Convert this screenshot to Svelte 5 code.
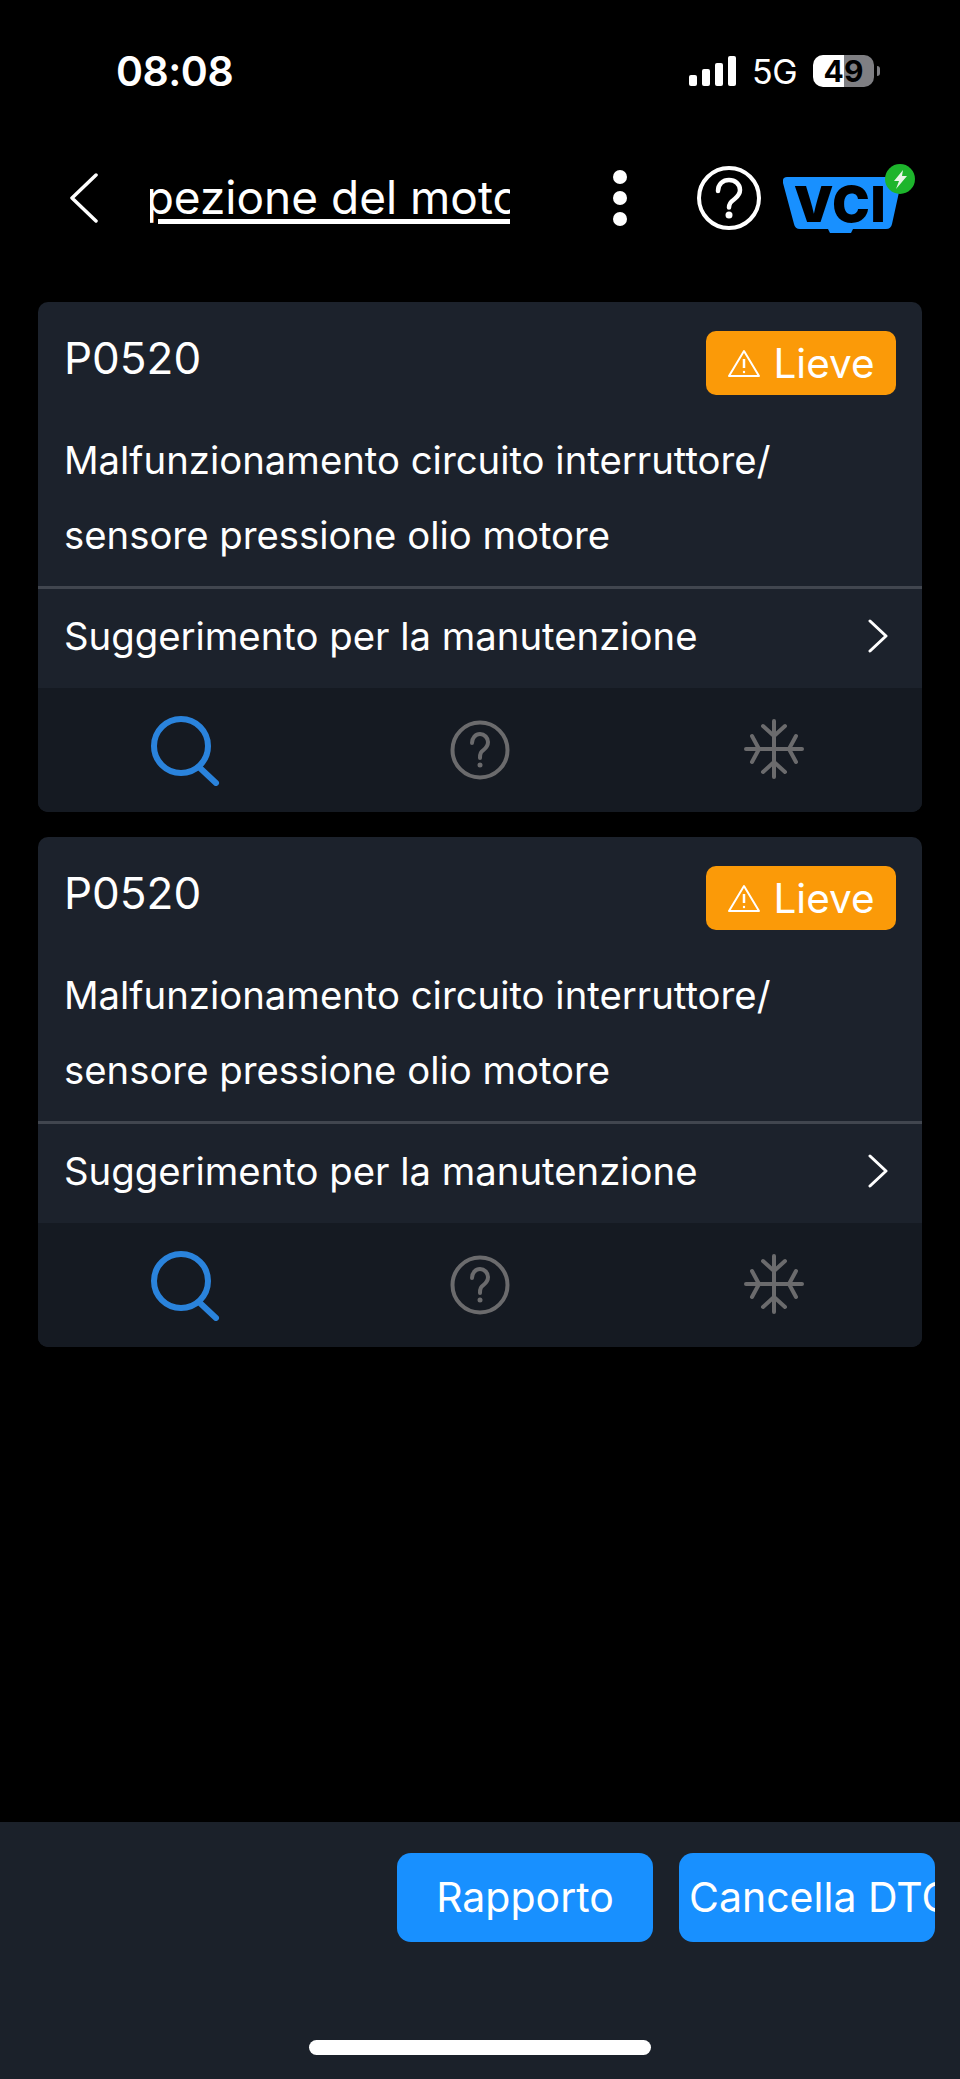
<script>
  const codes = [
    { code: 'P0520', sev: 'Lieve', l1: 'Malfunzionamento circuito interruttore/', l2: 'sensore pressione olio motore' },
    { code: 'P0520', sev: 'Lieve', l1: 'Malfunzionamento circuito interruttore/', l2: 'sensore pressione olio motore' }
  ];
</script>

<div class="page">
  <div class="status">
    <span class="time">08:08</span>
    <div class="status-right">
      <svg class="signal" width="48" height="30" viewBox="0 0 48 30" fill="#fff">
        <rect x="0" y="19" width="8" height="11" rx="2" />
        <rect x="13" y="13" width="8" height="17" rx="2" />
        <rect x="26" y="7" width="8" height="23" rx="2" />
        <rect x="39" y="0" width="8" height="30" rx="2" />
      </svg>
      <span class="net">5G</span>
      <div class="battery"><span>49</span></div>
      <div class="nub"></div>
    </div>
  </div>

  <div class="header">
    <svg class="back" width="28" height="50" viewBox="0 0 28 50" fill="none" stroke="#fff" stroke-width="3.5" stroke-linecap="round" stroke-linejoin="round">
      <path d="M26 2 L2 25 L26 48" />
    </svg>
    <div class="title"><span>Ispezione del motore</span></div>
    <div class="dots"><i></i><i></i><i></i></div>
    <svg class="help" width="64" height="64" viewBox="0 0 64 64" fill="none">
      <circle cx="32" cy="32" r="30" stroke="#fff" stroke-width="4" />
      <path d="M21 25c0-7 5-11 11-11s11 4 11 10c0 5-3 7-6 9.500-3 2-5 4-5 8" stroke="#fff" stroke-width="4.500" stroke-linecap="round" />
      <circle cx="32" cy="49" r="3.500" fill="#fff" />
    </svg>
    <div class="vci">
      <svg width="134" height="72" viewBox="0 0 134 72">
        <path d="M4 15 H113 Q119 15 118 21 L109 62 Q108 67 103 67 H70 L68 71 H47 L45 67 H17 Q12 67 11 62 L0 21 Q-1 15 4 15Z" fill="#1890ff" />
        <text x="57" y="60" text-anchor="middle" class="vci-text">VCI</text>
        <circle cx="117" cy="17" r="15" fill="#1db52c" />
        <path d="M120 8 L111 19 H116 L113 27 L124 14 H119Z" fill="#e8f5e8" />
      </svg>
    </div>
  </div>

  <div class="list">
    {#each codes as c}
      <div class="card">
        <div class="top">
          <span class="code">{c.code}</span>
          <div class="badge">
            <svg width="34" height="30" viewBox="0 0 34 30" fill="none" stroke="#fff" stroke-width="2" stroke-linejoin="round">
              <path d="M17 3 L32 28 H2Z" />
              <path d="M17 11 V20" stroke-width="2.500" />
              <circle cx="17" cy="24" r="1.200" fill="#fff" stroke="none" />
            </svg>
            <span>{c.sev}</span>
          </div>
        </div>
        <div class="desc">{c.l1}<br />{c.l2}</div>
        <div class="tip">
          <span>Suggerimento per la manutenzione</span>
          <svg width="20" height="34" viewBox="0 0 20 34" fill="none" stroke="#fff" stroke-width="3" stroke-linecap="round" stroke-linejoin="round">
            <path d="M2 2 L18 17 L2 32" />
          </svg>
        </div>
        <div class="tools">
          <svg class="search" width="72" height="72" viewBox="0 0 72 72" fill="none" stroke="#2a83dc" stroke-width="6" stroke-linecap="round">
            <circle cx="31" cy="32" r="27" />
            <path d="M50 54 L66 69" />
          </svg>
          <svg width="72" height="72" viewBox="0 0 72 72" fill="none" stroke="#6b6b6d" stroke-width="4">
            <circle cx="36" cy="36" r="27.500" />
            <path d="M28 29c0-5 3.500-9 8-9s8 4 8 8c0 4-2 6-4.500 8-2.500 2-3.500 3-3.500 8" stroke-linecap="round" />
            <circle cx="36" cy="51" r="2.500" fill="#6b6b6d" stroke="none" />
          </svg>
          <svg class="snow" width="72" height="72" viewBox="0 0 72 72" fill="none" stroke="#6b6b6d" stroke-width="4" stroke-linecap="round" stroke-linejoin="round">
            <path d="M36 7 V63 M8 35 H64" />
            <path d="M25 12 L36 22 L47 12 M25 58 L36 48 L47 58" />
            <path d="M14 22 L21 35 L14 48 M58 22 L51 35 L58 48" />
          </svg>
        </div>
      </div>
    {/each}
  </div>

  <div class="bottom">
    <div class="buttons">
      <div class="btn">Rapporto</div>
      <div class="btn clip">Cancella DTC</div>
    </div>
    <div class="home"></div>
  </div>
</div>

<style>
  :global(body) {
    margin: 0;
    background: #000;
  }

  .page {
    width: 960px;
    height: 2079px;
    display: flex;
    flex-direction: column;
    background: #000;
    color: #fff;
    font-family: Inter, "Liberation Sans", sans-serif;
    overflow: hidden;
  }

  .status {
    height: 142px;
    box-sizing: border-box;
    padding: 47px 80px 0 116px;
    display: flex;
    justify-content: space-between;
    align-items: flex-start;
  }

  .time {
    font-size: 41px;
    font-weight: 600;
    line-height: 48px;
    letter-spacing: -0.5px;
  }

  .status-right {
    display: flex;
    align-items: center;
    margin-top: 8px;
    height: 32px;
  }

  .signal {
    margin-right: 15px;
  }

  .net {
    font-size: 34px;
    font-weight: 400;
    width: 61px;
    letter-spacing: -0.5px;
  }

  .battery {
    width: 61px;
    height: 32px;
    border-radius: 10px;
    background: linear-gradient(90deg, #fff 31px, #7f7f83 31px);
    color: #000;
    font-size: 30px;
    font-weight: 700;
    text-align: center;
    line-height: 32px;
  }

  .nub {
    width: 3px;
    height: 10px;
    margin-left: 3px;
    border-radius: 0 3px 3px 0;
    background: #7f7f83;
  }

  .header {
    height: 160px;
    box-sizing: border-box;
    padding-left: 70px;
    display: flex;
    align-items: flex-start;
  }

  .back {
    margin-top: 31px;
    margin-right: 52px;
  }

  .title {
    width: 360px;
    overflow: hidden;
    white-space: nowrap;
    margin-top: 26px;
    font-size: 46px;
    line-height: 58px;
    height: 60px;
  }

  .title span {
    display: inline-block;
    margin-left: -41px;
    text-decoration: underline;
    text-decoration-thickness: 5px;
    text-underline-offset: 5px;
  }

  .dots {
    display: flex;
    flex-direction: column;
    gap: 7px;
    margin: 28px 0 0 103px;
  }

  .dots i {
    display: block;
    width: 14px;
    height: 14px;
    border-radius: 50%;
    background: #fff;
  }

  .help {
    margin: 24px 0 0 70px;
  }

  .vci {
    margin: 20px 0 0 22px;
    height: 72px;
  }

  .vci-text {
    font-family: Inter, sans-serif;
    font-weight: 900;
    font-size: 50px;
    fill: #000;
    letter-spacing: 1px;
  }

  .list {
    flex: 1;
    padding: 0 38px;
    display: flex;
    flex-direction: column;
    gap: 25px;
  }

  .card {
    height: 510px;
    border-radius: 10px;
    background: #1c222c;
    overflow: hidden;
    display: flex;
    flex-direction: column;
  }

  .top {
    display: flex;
    justify-content: space-between;
    align-items: flex-start;
    padding: 29px 26px 0 26px;
  }

  .code {
    font-size: 44px;
    line-height: 54px;
    font-weight: 400;
  }

  .badge {
    width: 190px;
    height: 64px;
    border-radius: 10px;
    background: #fb9a08;
    display: flex;
    align-items: center;
    justify-content: center;
    gap: 12px;
    font-size: 40.500px;
  }

  .desc {
    padding: 0 26px;
    margin-top: 28px;
    height: 166px;
    box-sizing: border-box;
    font-size: 38.300px;
    line-height: 75px;
    white-space: nowrap;
    border-bottom: 3px solid #41464f;
  }

  .tip {
    height: 99px;
    flex: none;
    box-sizing: border-box;
    display: flex;
    align-items: center;
    justify-content: space-between;
    padding: 0 34px 5px 26px;
    font-size: 38.300px;
  }

  .tools {
    flex: 1;
    background: #151a22;
    display: grid;
    grid-template-columns: 1fr 1fr 1fr;
    align-items: center;
    justify-items: center;
  }

  .search {
    margin-left: 2px;
  }

  .snow {
    margin-right: 2px;
  }

  .bottom {
    height: 257px;
    box-sizing: border-box;
    background: #1b212a;
    padding-top: 31px;
    display: flex;
    flex-direction: column;
  }

  .buttons {
    display: flex;
    justify-content: flex-end;
    gap: 26px;
    padding-right: 25px;
  }

  .btn {
    width: 256px;
    height: 89px;
    border-radius: 14px;
    background: #1890ff;
    font-size: 41px;
    line-height: 89px;
    text-align: center;
    white-space: nowrap;
    overflow: hidden;
  }

  .btn.clip {
    text-align: left;
    padding-left: 10px;
    width: 246px;
  }

  .home {
    width: 342px;
    height: 15px;
    border-radius: 8px;
    background: #fff;
    margin: 98px 0 0 309px;
  }
</style>
